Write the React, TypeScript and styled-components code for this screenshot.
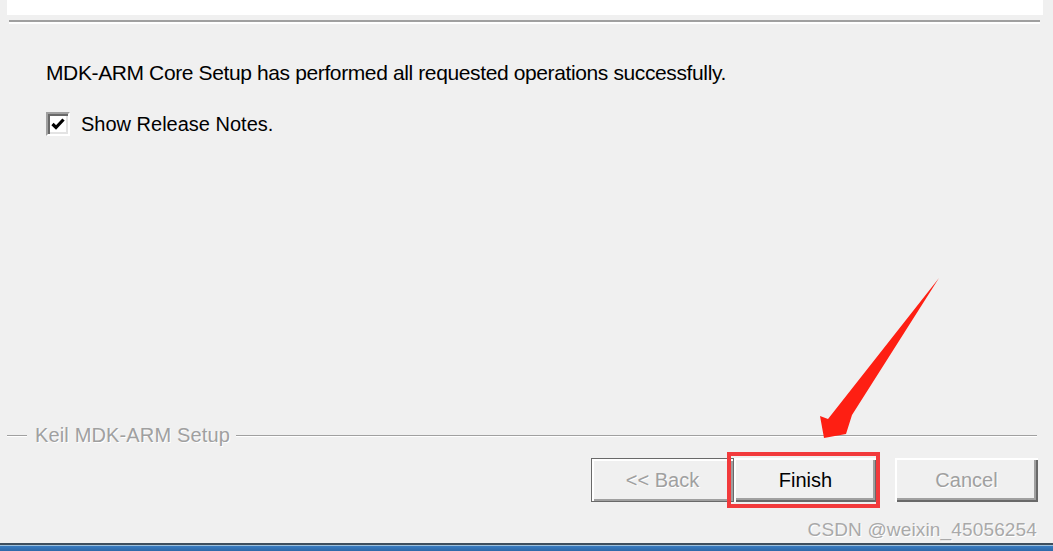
import styled, { createGlobalStyle } from "styled-components";

const GlobalStyle = createGlobalStyle`
  html, body {
    margin: 0;
    padding: 0;
    background: #f0f0f0;
  }
  body {
    font-family: "Liberation Sans", Arial, sans-serif;
    overflow: hidden;
  }
`;

const Window = styled.div`
  position: relative;
  width: 1053px;
  height: 551px;
  display: flex;
  flex-direction: column;
  background: #f0f0f0;
  overflow: hidden;
`;

const HeaderPanel = styled.div`
  height: 15px;
  margin: 0 10px 0 7px;
  background: #ffffff;
`;

const Separator = styled.div`
  margin: 5px 13px 0 9px;
  border-top: 2px solid #a0a0a0;
  border-bottom: 2px solid #ffffff;
`;

const Body = styled.div`
  flex: 1;
  display: flex;
  flex-direction: column;
  padding: 37px 0 0 46px;
`;

const Message = styled.div`
  font-size: 21px;
  line-height: 24px;
  letter-spacing: -0.38px;
  color: #000;
`;

const CheckRow = styled.label`
  margin-top: 27px;
  height: 24px;
  display: flex;
  align-items: center;
  gap: 11px;
  font-size: 20px;
  color: #000;
`;

const CheckBox = styled.span`
  width: 24px;
  height: 24px;
  box-sizing: border-box;
  display: flex;
  align-items: center;
  justify-content: center;
  background: #ffffff;
  border: 2px solid;
  border-color: #a0a0a0 #ffffff #ffffff #a0a0a0;
  box-shadow: inset 2px 2px 0 #696969, inset -2px -2px 0 #e3e3e3;
  svg {
    width: 14px;
    height: 14px;
  }
`;

const GroupRow = styled.div`
  height: 23px;
  display: flex;
  align-items: center;
  margin: 0 16px 0 7px;
`;

const GroupLine = styled.div<{ $grow?: boolean }>`
  width: ${(p) => (p.$grow ? "auto" : "20px")};
  flex: ${(p) => (p.$grow ? 1 : "none")};
  border-top: 1px solid #a0a0a0;
  border-bottom: 1px solid #ffffff;
`;

const GroupLabel = styled.span`
  margin: 0 6px 0 8px;
  font-size: 20px;
  line-height: 23px;
  letter-spacing: 0.15px;
  color: #a0a0a0;
  text-shadow: 1px 1px 0 #ffffff;
`;

const ButtonRow = styled.div`
  margin: 11px 15px 0 0;
  display: flex;
  justify-content: flex-end;
  align-items: center;
`;

const Button = styled.button<{ $disabled?: boolean; $framed?: boolean }>`
  width: 143px;
  height: 44px;
  box-sizing: border-box;
  margin: 0;
  padding: 0;
  font-family: "Liberation Sans", Arial, sans-serif;
  font-size: 20px;
  background: #f0f0f0;
  color: ${(p) => (p.$disabled ? "#a0a0a0" : "#000")};
  text-shadow: ${(p) => (p.$disabled ? "1px 1px 0 #ffffff" : "none")};
  border: ${(p) => (p.$framed ? "1px solid #696969" : "none")};
  box-shadow: ${(p) =>
    p.$framed
      ? "inset 2px 2px 0 #ffffff, inset -2px -2px 0 #a0a0a0"
      : "inset 2px 2px 0 #ffffff, inset -2px -2px 0 #696969, inset -4px -4px 0 #a0a0a0"};
`;

const Highlight = styled.div`
  position: relative;
  display: flex;
  &::after {
    content: "";
    position: absolute;
    top: -6px;
    bottom: -6px;
    left: -7px;
    right: -3px;
    border: 4px solid #f23a3c;
    pointer-events: none;
  }
`;

const Gap = styled.div`
  width: 18px;
`;

const Watermark = styled.div`
  margin-top: 17px;
  padding-right: 16px;
  text-align: right;
  font-size: 19px;
  line-height: 22px;
  letter-spacing: 0.15px;
  color: #a9a9a9;
  text-shadow: 1px 1px 0 #ffffff;
`;

const Taskbar = styled.div`
  margin-top: 2px;
  height: 8px;
  background: linear-gradient(
    to bottom,
    #3e4f5e 0,
    #3e4f5e 2px,
    #9cc0dd 2px,
    #9cc0dd 3px,
    #3a7cc0 3px,
    #2d68a8 8px
  );
`;

const Arrow = styled.svg`
  position: absolute;
  left: 815px;
  top: 275px;
  width: 130px;
  height: 170px;
  pointer-events: none;
`;

export default function App() {
  return (
    <>
      <GlobalStyle />
      <Window>
        <HeaderPanel />
        <Separator />
        <Body>
          <Message>
            MDK-ARM Core Setup has performed all requested operations
            successfully.
          </Message>
          <CheckRow>
            <CheckBox>
              <svg viewBox="0 0 14 14">
                <path
                  d="M1.5 7 L5 10.5 L12.5 2.5"
                  fill="none"
                  stroke="#000"
                  strokeWidth="3.2"
                />
              </svg>
            </CheckBox>
            Show Release Notes.
          </CheckRow>
        </Body>
        <GroupRow>
          <GroupLine />
          <GroupLabel>Keil MDK-ARM Setup</GroupLabel>
          <GroupLine $grow />
        </GroupRow>
        <ButtonRow>
          <Button $disabled $framed>
            &lt;&lt; Back
          </Button>
          <Highlight>
            <Button>Finish</Button>
          </Highlight>
          <Gap />
          <Button $disabled>Cancel</Button>
        </ButtonRow>
        <Watermark>CSDN @weixin_45056254</Watermark>
        <Taskbar />
        <Arrow viewBox="0 0 130 170">
          <polygon
            points="124,3 37,140 31,159 9,163 5,141 13,144"
            fill="#fe1f13"
          />
        </Arrow>
      </Window>
    </>
  );
}
